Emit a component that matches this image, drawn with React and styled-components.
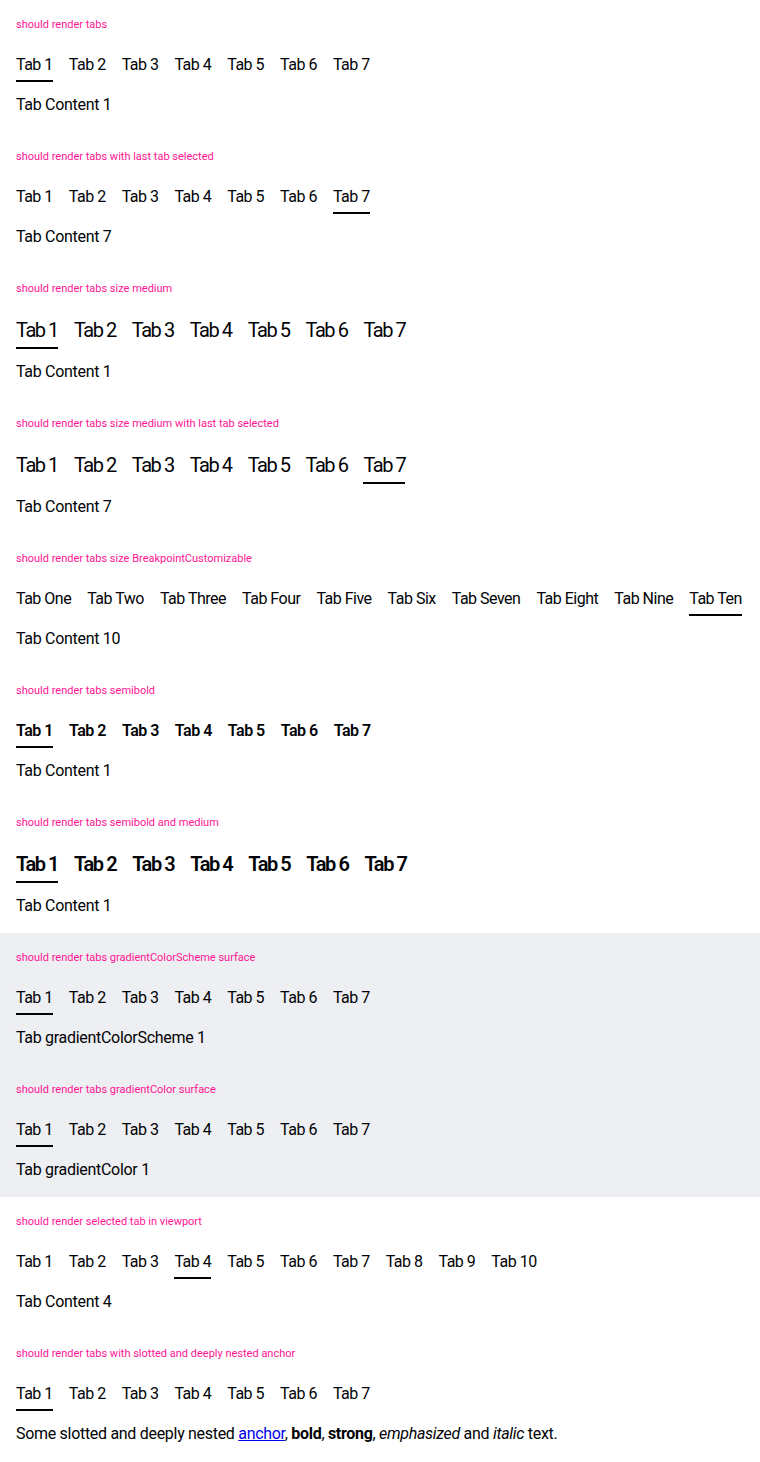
import React from "react";
import styled, { createGlobalStyle } from "styled-components";

const GlobalStyle = createGlobalStyle`
  * {
    box-sizing: border-box;
  }
  body {
    margin: 0;
    background: #ffffff;
    font-family: Roboto, "Liberation Sans", sans-serif;
    color: #010205;
  }
`;

const Page = styled.div`
  width: 760px;
`;

const Section = styled.section`
  padding: 17px 16px 15px;
  background: ${(p) => (p.$surface ? "#eeeff2" : "transparent")};
`;

const Label = styled.p`
  margin: 0 0 19px;
  font-size: 11px;
  line-height: 16px;
  color: deeppink;
`;

const Bar = styled.div`
  display: flex;
  gap: 16px;
`;

const Tab = styled.button`
  appearance: none;
  border: 0;
  background: none;
  margin: 0;
  padding: ${(p) => (p.$medium ? "0 0 3px" : "1px 0 3px")};
  font-family: inherit;
  font-size: ${(p) => (p.$medium ? "20px" : "16px")};
  line-height: ${(p) => (p.$medium ? "28px" : "24px")};
  letter-spacing: ${(p) => (p.$medium ? "-1.45px" : "-0.5px")};
  font-weight: ${(p) => (p.$bold ? 600 : 400)};
  color: #010205;
  white-space: nowrap;
  border-bottom: 2px solid ${(p) => (p.$active ? "#010205" : "transparent")};
`;

const Content = styled.div`
  margin-top: 11px;
  font-size: 16px;
  line-height: 24px;
  letter-spacing: -0.3px;
`;

const tabs7 = ["Tab 1", "Tab 2", "Tab 3", "Tab 4", "Tab 5", "Tab 6", "Tab 7"];
const tabs10 = [...tabs7, "Tab 8", "Tab 9", "Tab 10"];
const words = [
  "Tab One",
  "Tab Two",
  "Tab Three",
  "Tab Four",
  "Tab Five",
  "Tab Six",
  "Tab Seven",
  "Tab Eight",
  "Tab Nine",
  "Tab Ten",
];

const nested = (
  <>
    Some slotted and deeply nested <a href="#">anchor</a>, <b>bold</b>,{" "}
    <strong>strong</strong>, <em>emphasized</em> and <i>italic</i> text.
  </>
);

const demos = [
  { label: "should render tabs", tabs: tabs7, active: 0, content: "Tab Content 1" },
  { label: "should render tabs with last tab selected", tabs: tabs7, active: 6, content: "Tab Content 7" },
  { label: "should render tabs size medium", tabs: tabs7, active: 0, medium: true, content: "Tab Content 1" },
  { label: "should render tabs size medium with last tab selected", tabs: tabs7, active: 6, medium: true, content: "Tab Content 7" },
  { label: "should render tabs size BreakpointCustomizable", tabs: words, active: 9, content: "Tab Content 10" },
  { label: "should render tabs semibold", tabs: tabs7, active: 0, bold: true, content: "Tab Content 1" },
  { label: "should render tabs semibold and medium", tabs: tabs7, active: 0, bold: true, medium: true, content: "Tab Content 1" },
  { label: "should render tabs gradientColorScheme surface", tabs: tabs7, active: 0, surface: true, content: "Tab gradientColorScheme 1" },
  { label: "should render tabs gradientColor surface", tabs: tabs7, active: 0, surface: true, content: "Tab gradientColor 1" },
  { label: "should render selected tab in viewport", tabs: tabs10, active: 3, content: "Tab Content 4" },
  { label: "should render tabs with slotted and deeply nested anchor", tabs: tabs7, active: 0, content: nested },
];

export default function App() {
  return (
    <Page>
      <GlobalStyle />
      {demos.map((d) => (
        <Section key={d.label} $surface={d.surface}>
          <Label>{d.label}</Label>
          <Bar>
            {d.tabs.map((t, i) => (
              <Tab key={t} $active={i === d.active} $medium={d.medium} $bold={d.bold}>
                {t}
              </Tab>
            ))}
          </Bar>
          <Content>{d.content}</Content>
        </Section>
      ))}
    </Page>
  );
}
